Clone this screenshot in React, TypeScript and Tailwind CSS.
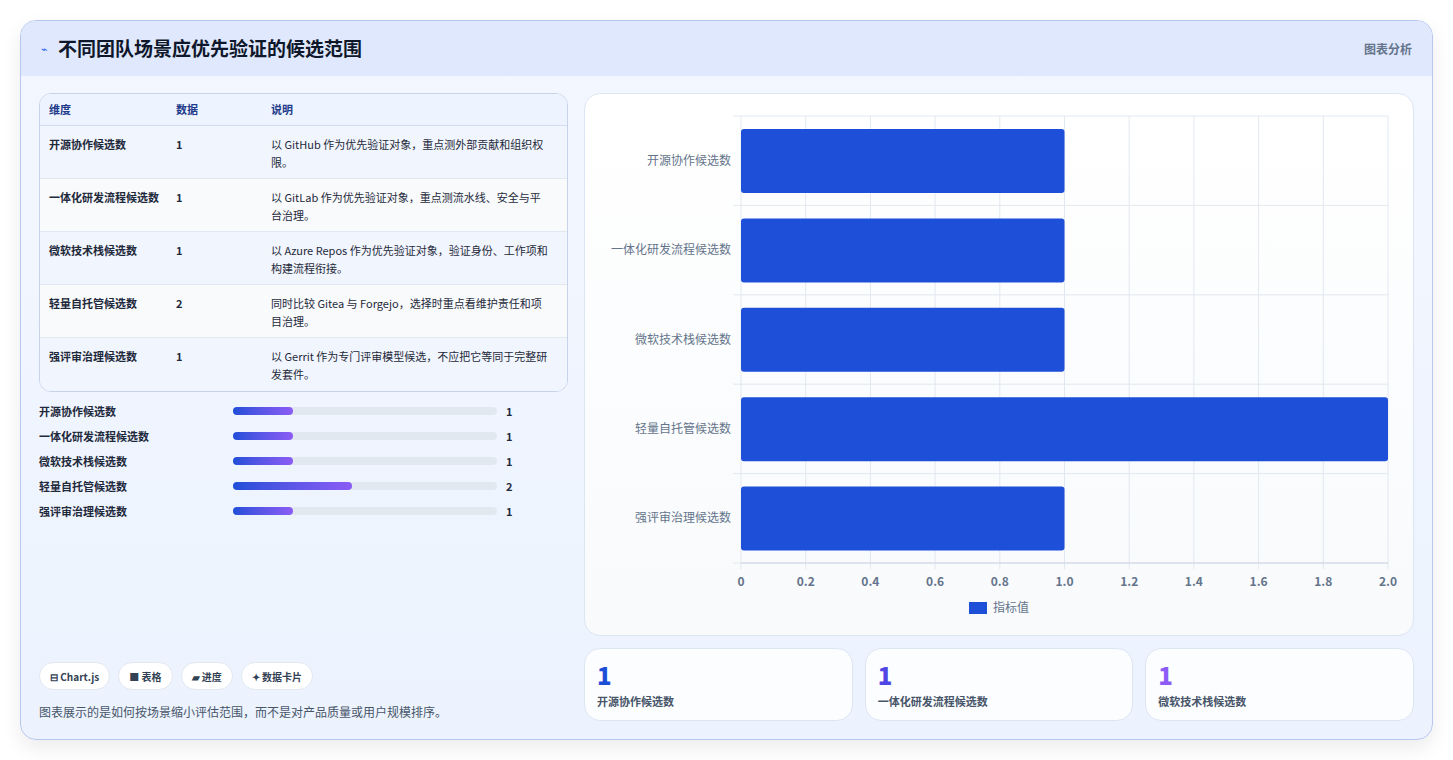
const rows = [
  { name: "开源协作候选数", v: 1, desc: "以 GitHub 作为优先验证对象，重点测外部贡献和组织权限。" },
  { name: "一体化研发流程候选数", v: 1, desc: "以 GitLab 作为优先验证对象，重点测流水线、安全与平台治理。" },
  { name: "微软技术栈候选数", v: 1, desc: "以 Azure Repos 作为优先验证对象，验证身份、工作项和构建流程衔接。" },
  { name: "轻量自托管候选数", v: 2, desc: "同时比较 Gitea 与 Forgejo，选择时重点看维护责任和项目治理。" },
  { name: "强评审治理候选数", v: 1, desc: "以 Gerrit 作为专门评审模型候选，不应把它等同于完整研发套件。" },
]

const font = { fontFamily: '"Noto Sans CJK SC", "Noto Sans", sans-serif' }

function Chart() {
  const L = 156, T = 22, W = 647, H = 447
  const band = H / 5
  const ticks = [0, 0.2, 0.4, 0.6, 0.8, 1.0, 1.2, 1.4, 1.6, 1.8, 2.0]
  return (
    <svg width="828" height="542" className="block">
      {ticks.map((t, i) => {
        const x = L + (W * t) / 2
        return (
          <g key={i}>
            <line x1={x} y1={T} x2={x} y2={T + H + 6} stroke="#e2e8f0" />
            <text x={x} y={T + H + 23} textAnchor="middle" fontSize="12" fill="#64748b" fontWeight="600" style={font}>
              {i === 0 ? "0" : t.toFixed(1).replace(/\.0$/, i === 10 || i === 5 ? ".0" : "")}
            </text>
          </g>
        )
      })}
      {[0, 1, 2, 3, 4, 5].map(i => (
        <line key={i} x1={L - 8} y1={T + i * band} x2={L + W} y2={T + i * band} stroke="#e2e8f0" />
      ))}
      <line x1={L} y1={T + H} x2={L + W} y2={T + H} stroke="#cbd5e1" />
      {rows.map((r, i) => (
        <g key={i}>
          <rect x={L} y={T + i * band + 13} width={(W * r.v) / 2} height={64} rx={3} fill="#1d4fd8" />
          <text x={L - 10} y={T + i * band + band / 2 + 4} textAnchor="end" fontSize="12" fill="#64748b" style={font}>
            {r.name}
          </text>
        </g>
      ))}
      <rect x={384} y={508} width={18} height={12} fill="#1d4fd8" />
      <text x={408} y={518} fontSize="12" fill="#64748b" style={font}>指标值</text>
    </svg>
  )
}

export default function App() {
  return (
    <div className="min-h-screen bg-white p-5" style={font}>
      <div className="h-[720px] rounded-2xl border border-[#b9c6ee] overflow-hidden flex flex-col bg-gradient-to-b from-[#f3f7ff] to-[#ecf3fe] shadow-[0_8px_20px_rgba(0,0,0,0.08)]">
        <div className="h-[55px] shrink-0 bg-[#dfe8fd] flex items-center justify-between px-5">
          <div className="flex items-center gap-2.5">
            <span className="text-[#2563eb] text-[11px]">⌁</span>
            <span className="text-[19px] font-bold text-[#0f172a]">不同团队场景应优先验证的候选范围</span>
          </div>
          <span className="text-[12px] font-semibold text-[#64748b]">图表分析</span>
        </div>
        <div className="flex-1 flex gap-4 px-[18px] pt-[17px] pb-[18px]">
          <div className="w-[531px] flex flex-col">
            <div className="rounded-xl border border-[#c8d3ea] overflow-hidden bg-white">
              <div className="grid grid-cols-[127px_95px_1fr] h-8 items-center px-[9px] bg-[#eef4ff] border-b border-[#d3dcee] text-[11px] font-semibold text-[#1e3a8a]">
                <span>维度</span><span>数据</span><span>说明</span>
              </div>
              {rows.map((r, i) => (
                <div key={i} className={`grid grid-cols-[127px_95px_1fr] h-[53px] pt-[9px] px-[9px] text-[11px] leading-[18px] text-[#1e293b] ${i < 4 ? "border-b border-[#e2e8f0]" : ""} ${i % 2 ? "bg-[#f8fafc]" : "bg-[#f1f5fd]"}`}>
                  <span className="font-semibold pr-2">{r.name}</span>
                  <span className="font-bold">{r.v}</span>
                  <span className="pr-2">{r.desc}</span>
                </div>
              ))}
            </div>
            <div className="mt-2.5 flex flex-col gap-[7px]">
              {rows.map((r, i) => (
                <div key={i} className="flex items-center h-[18px] text-[11px] font-semibold text-[#1e293b]">
                  <span className="w-[194px]">{r.name}</span>
                  <div className="w-[264px] h-2 rounded-full bg-[#e2e8f0]">
                    <div className="h-2 rounded-full bg-gradient-to-r from-[#1d4ed8] to-[#8b5cf6]" style={{ width: `${r.v * 22.6}%` }} />
                  </div>
                  <span className="ml-[9px] font-bold">{r.v}</span>
                </div>
              ))}
            </div>
            <div className="mt-auto flex gap-2">
              {["⊟ Chart.js", "■ 表格", "▰ 进度", "✦ 数据卡片"].map(c => (
                <span key={c} className="h-7 px-2.5 flex items-center rounded-full bg-white border border-[#e2e8f0] text-[10px] font-bold text-[#334155]">{c}</span>
              ))}
            </div>
            <p className="mt-[13px] text-[12px] text-[#475569]">图表展示的是如何按场景缩小评估范围，而不是对产品质量或用户规模排序。</p>
          </div>
          <div className="flex-1 flex flex-col gap-3">
            <div className="h-[543px] rounded-2xl border border-[#dde5f3] bg-gradient-to-b from-white to-[#f8fafc]">
              <Chart />
            </div>
            <div className="grid grid-cols-3 gap-3 flex-1">
              {rows.slice(0, 3).map((r, i) => (
                <div key={i} className="rounded-2xl border border-[#dde5f3] bg-[#fcfdff] px-3 pt-3">
                  <div className={`text-[24px] font-extrabold leading-7 ${["text-[#1d4ed8]", "text-[#4f46e5]", "text-[#8b5cf6]"][i]}`}>{r.v}</div>
                  <div className="mt-1 text-[11px] font-semibold text-[#475569]">{r.name}</div>
                </div>
              ))}
            </div>
          </div>
        </div>
      </div>
    </div>
  )
}
